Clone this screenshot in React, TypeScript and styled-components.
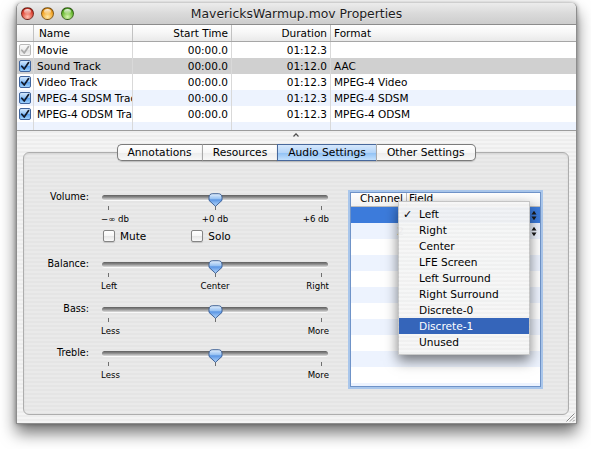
import { FC } from 'react'
import styled, { createGlobalStyle } from 'styled-components'

const GlobalStyle = createGlobalStyle`
  html, body {
    margin: 0;
    background: #ffffff;
  }
  body {
    font-family: 'DejaVu Sans', 'Liberation Sans', sans-serif;
    color: #000;
  }
`

type Track = { name: string; start: string; duration: string; format: string; disabled?: boolean }

const tracks: Track[] = [
  { name: 'Movie', start: '00:00.0', duration: '01:12.3', format: '', disabled: true },
  { name: 'Sound Track', start: '00:00.0', duration: '01:12.0', format: 'AAC' },
  { name: 'Video Track', start: '00:00.0', duration: '01:12.3', format: 'MPEG-4 Video' },
  { name: 'MPEG-4 SDSM Track', start: '00:00.0', duration: '01:12.3', format: 'MPEG-4 SDSM' },
  { name: 'MPEG-4 ODSM Track', start: '00:00.0', duration: '01:12.3', format: 'MPEG-4 ODSM' }
]

const sliders = [
  { label: 'Volume:', value: 50, marks: ['−∞ db', '+0 db', '+6 db'], top: 0, checks: true },
  { label: 'Balance:', value: 50, marks: ['Left', 'Center', 'Right'], top: 14 },
  { label: 'Bass:', value: 50, marks: ['Less', '', 'More'], top: 8 },
  { label: 'Treble:', value: 50, marks: ['Less', '', 'More'], top: 7 }
]

const channels = ['Left', 'Right', 'Center', 'LFE Screen', 'Left Surround', 'Right Surround', 'Discrete-0', 'Discrete-1', 'Unused']

const rowTone = (i: number, selected: boolean) => (selected ? 'selected' : i % 2 === 0 ? 'plain' : 'stripe')

const CheckMark: FC<{ color: string }> = ({ color }) => (
  <svg width="10" height="10" viewBox="0 0 10 10">
    <path d="M1.8 5.2 L4.2 8 L8.6 1.6" fill="none" stroke={color} strokeWidth="1.7" strokeLinecap="round" strokeLinejoin="round" />
  </svg>
)

const SliderThumb: FC = () => (
  <svg width="15" height="14" viewBox="0 0 15 14">
    <defs>
      <linearGradient id="thumbFill" x1="0" y1="0" x2="0" y2="1">
        <stop offset="0" stopColor="#e4effc" />
        <stop offset="0.42" stopColor="#93bff1" />
        <stop offset="0.48" stopColor="#5a95e4" />
        <stop offset="1" stopColor="#b6d8fb" />
      </linearGradient>
    </defs>
    <path
      d="M1 4.4 C1 2 2.4 0.7 4.8 0.7 H10.2 C12.6 0.7 14 2 14 4.4 V7.4 L7.5 13.3 L1 7.4 Z"
      fill="url(#thumbFill)"
      stroke="#34588e"
      strokeWidth="0.9"
    />
  </svg>
)

const PopupArrows: FC = () => (
  <svg width="6" height="11" viewBox="0 0 6 11">
    <path d="M0.5 4.5 L3 0.8 L5.5 4.5 Z M0.5 6.5 L3 10.2 L5.5 6.5 Z" fill="#1b1b1b" />
  </svg>
)

const App: FC = () => {
  return (
    <Page>
      <GlobalStyle />
      <Window>
        <TitleBar>
          <Lights>
            <Light $color="red" />
            <Light $color="yellow" />
            <Light $color="green" />
          </Lights>
          <Title>MavericksWarmup.mov Properties</Title>
          <span />
        </TitleBar>

        <TrackTable>
          <HeaderRow>
            <HeaderCell />
            <HeaderCell $pad="0 4px 0 5px">Name</HeaderCell>
            <HeaderCell $align="right">Start Time</HeaderCell>
            <HeaderCell $align="right">Duration</HeaderCell>
            <HeaderCell $last>Format</HeaderCell>
          </HeaderRow>
          {tracks.map((t, i) => (
            <TrackRow key={t.name} $tone={rowTone(i, i === 1)}>
              <Cell $pad="0 0 0 2px">
                <TrackCheck $disabled={t.disabled}>
                  <CheckMark color={t.disabled ? '#a9a9a9' : '#121a2a'} />
                </TrackCheck>
              </Cell>
              <Cell>{t.name}</Cell>
              <Cell $align="right">{t.start}</Cell>
              <Cell $align="right">{t.duration}</Cell>
              <Cell $last>{t.format}</Cell>
            </TrackRow>
          ))}
          <TrackRow $tone="stripe" $short>
            <Cell />
            <Cell />
            <Cell />
            <Cell />
            <Cell $last />
          </TrackRow>
        </TrackTable>

        <Splitter>
          <svg width="6" height="4" viewBox="0 0 6 4">
            <path d="M0.5 3.5 L3 0.8 L5.5 3.5" fill="none" stroke="#505050" strokeWidth="1.2" />
          </svg>
        </Splitter>

        <TabBar>
          <Tab $first>Annotations</Tab>
          <Tab>Resources</Tab>
          <Tab $active>Audio Settings</Tab>
          <Tab $last>Other Settings</Tab>
        </TabBar>

        <GroupBox>
          <LeftPanel>
            {sliders.map((s) => (
              <SliderGroup key={s.label} $top={s.top}>
                <SliderRow>
                  <SliderLabel>{s.label}</SliderLabel>
                  <SliderBody>
                    <SliderTrack />
                    <ThumbHolder style={{ left: `calc(${s.value}% - 7.5px)` }}>
                      <SliderThumb />
                    </ThumbHolder>
                    <Ticks>
                      <Tick />
                      <Tick />
                      <Tick />
                    </Ticks>
                    <TickLabels>
                      <TickLabel $side="start">{s.marks[0]}</TickLabel>
                      <TickLabel $side="center">{s.marks[1]}</TickLabel>
                      <TickLabel $side="end">{s.marks[2]}</TickLabel>
                    </TickLabels>
                  </SliderBody>
                </SliderRow>
                {s.checks && (
                  <CheckRow>
                    <CheckItem>
                      <PlainCheck />
                      Mute
                    </CheckItem>
                    <CheckItem>
                      <PlainCheck />
                      Solo
                    </CheckItem>
                  </CheckRow>
                )}
              </SliderGroup>
            ))}
          </LeftPanel>

          <ChannelWrap>
            <ChannelBox>
              <ChannelHeader>
                <ChannelHeadCell $divider>Channel</ChannelHeadCell>
                <ChannelHeadCell>Field</ChannelHeadCell>
              </ChannelHeader>
              {Array.from({ length: 12 }).map((_, i) => (
                <ChannelRow key={i} $tone={rowTone(i, i === 0)}>
                  <ChannelNum $selected={i === 0}>{i < 2 ? i + 1 : ''}</ChannelNum>
                  <FieldCell>{i < 2 && <PopupArrows />}</FieldCell>
                </ChannelRow>
              ))}
            </ChannelBox>

            <Menu>
              {channels.map((c, i) => (
                <MenuItem key={c} $highlight={c === 'Discrete-1'}>
                  <MenuCheck>{i === 0 ? '✓' : ''}</MenuCheck>
                  {c}
                </MenuItem>
              ))}
            </Menu>
          </ChannelWrap>
        </GroupBox>

        <ResizeGrip width="11" height="11" viewBox="0 0 11 11">
          <path d="M10.5 2.5 L2.5 10.5 M10.5 6 L6 10.5 M10.5 9 L9 10.5" stroke="#8a8a8a" strokeWidth="1" />
          <path d="M10.5 3.5 L3.5 10.5 M10.5 7 L7 10.5" stroke="#ffffff" strokeWidth="0.8" />
        </ResizeGrip>
      </Window>
    </Page>
  )
}

const Page = styled.div`
  padding: 3px 14px 30px 16px;
`

const Window = styled.div`
  position: relative;
  width: 561px;
  box-sizing: border-box;
  border: 1px solid #8d8d8d;
  border-top: none;
  border-radius: 5px 5px 0 0;
  overflow: hidden;
  padding-bottom: 8px;
  background: repeating-linear-gradient(to bottom, #ededed 0px, #ededed 2px, #f4f4f4 2px, #f4f4f4 4px);
  box-shadow: 0 9px 16px rgba(0, 0, 0, 0.55), 0 0 4px rgba(0, 0, 0, 0.35);
  font-size: 10.5px;
`

const TitleBar = styled.div`
  height: 22px;
  box-sizing: border-box;
  display: grid;
  grid-template-columns: 1fr auto 1fr;
  align-items: center;
  border-bottom: 1px solid #8c8c8c;
  border-radius: 5px 5px 0 0;
  background: linear-gradient(to bottom, #ececec 0%, #dadada 50%, #cdcdcd 100%);
`

const Lights = styled.div`
  display: flex;
  gap: 7px;
  padding-left: 4px;
`

const lightColors = {
  red: ['#ffc2b3', '#e04a3a', '#a3170d'],
  yellow: ['#ffe9a8', '#f3a62a', '#b76c08'],
  green: ['#d8f5b0', '#6cbb34', '#2f7c12']
}

const Light = styled.span<{ $color: keyof typeof lightColors }>`
  position: relative;
  width: 13px;
  height: 13px;
  box-sizing: border-box;
  border-radius: 50%;
  border: 1px solid rgba(0, 0, 0, 0.45);
  background: radial-gradient(
    circle at 50% 80%,
    ${(p) => lightColors[p.$color][0]} 0%,
    ${(p) => lightColors[p.$color][1]} 55%,
    ${(p) => lightColors[p.$color][2]} 100%
  );

  &::after {
    content: '';
    position: absolute;
    left: 2px;
    right: 2px;
    top: 1px;
    height: 5px;
    border-radius: 50%;
    background: linear-gradient(rgba(255, 255, 255, 0.9), rgba(255, 255, 255, 0.1));
  }
`

const Title = styled.div`
  font-size: 12.4px;
  color: #1c1c1c;
  text-shadow: 0 1px 0 rgba(255, 255, 255, 0.5);
  white-space: nowrap;
`

const gridCols = '17px 99px 99px 99px 1fr'

const TrackTable = styled.div`
  background: #ffffff;
  border-bottom: 1px solid #9c9c9c;
`

const HeaderRow = styled.div`
  display: grid;
  grid-template-columns: ${gridCols};
  height: 17px;
  box-sizing: border-box;
  border-bottom: 1px solid #a6a6a6;
  background: linear-gradient(to bottom, #ffffff 0%, #f6f6f6 50%, #e9e9e9 100%);
`

const HeaderCell = styled.div<{ $align?: 'left' | 'right'; $pad?: string; $last?: boolean }>`
  text-align: ${(p) => p.$align || 'left'};
  padding: ${(p) => p.$pad || '0 3px'};
  line-height: 16px;
  border-right: ${(p) => (p.$last ? 'none' : '1px solid #c2c2c2')};
  white-space: nowrap;
  overflow: hidden;
`

const toneColors = {
  plain: '#ffffff',
  stripe: '#edf3fe',
  selected: '#d0d0d0'
}

const TrackRow = styled.div<{ $tone: keyof typeof toneColors; $short?: boolean }>`
  display: grid;
  grid-template-columns: ${gridCols};
  height: ${(p) => (p.$short ? '8px' : '16px')};
  background: ${(p) => toneColors[p.$tone]};
`

const Cell = styled.div<{ $align?: 'left' | 'right'; $pad?: string; $last?: boolean }>`
  display: flex;
  align-items: center;
  justify-content: ${(p) => (p.$align === 'right' ? 'flex-end' : 'flex-start')};
  padding: ${(p) => p.$pad || '0 3px'};
  border-right: ${(p) => (p.$last ? 'none' : '1px solid #d9d9d9')};
  white-space: nowrap;
  overflow: hidden;
  line-height: 16px;
`

const TrackCheck = styled.span<{ $disabled?: boolean }>`
  display: flex;
  align-items: center;
  justify-content: center;
  width: 12px;
  height: 12px;
  box-sizing: border-box;
  border-radius: 2px;
  border: 1px solid ${(p) => (p.$disabled ? '#b9b9b9' : '#3f649d')};
  background: ${(p) =>
    p.$disabled
      ? 'linear-gradient(#fbfbfb, #ececec 50%, #e0e0e0 51%, #f2f2f2)'
      : 'linear-gradient(#d3e8fd, #8dc0f4 50%, #5aa0ee 51%, #9dd0fb)'};
`

const Splitter = styled.div`
  height: 13px;
  box-sizing: border-box;
  display: flex;
  justify-content: center;
  padding: 2px 2px 0 0;
`

const TabBar = styled.div`
  position: relative;
  z-index: 1;
  display: flex;
  justify-content: center;
  height: 17px;
  padding-right: 1px;
`

const Tab = styled.div<{ $active?: boolean; $first?: boolean; $last?: boolean }>`
  height: 17px;
  box-sizing: border-box;
  display: flex;
  align-items: center;
  padding: 0 10px;
  font-size: 10.7px;
  white-space: nowrap;
  border: 1px solid ${(p) => (p.$active ? '#48689b' : '#7b7b7b')};
  border-left: ${(p) => (p.$first ? '1px solid #7b7b7b' : p.$active ? '1px solid #48689b' : '1px solid #a9a9a9')};
  border-right: ${(p) => (p.$last ? '1px solid #7b7b7b' : 'none')};
  border-radius: ${(p) => (p.$first ? '5px 0 0 5px' : p.$last ? '0 5px 5px 0' : '0')};
  background: ${(p) =>
    p.$active
      ? 'linear-gradient(#d6e8fc, #b3d4f8 50%, #8ec0f4 51%, #c2e0fd)'
      : 'linear-gradient(#ffffff, #f7f7f7 50%, #ececec 51%, #f8f8f8)'};
  box-shadow: 0 1px 1px rgba(0, 0, 0, 0.18);
`

const GroupBox = styled.div`
  display: flex;
  align-items: flex-start;
  margin: -9px 7px 0 6px;
  height: 263px;
  box-sizing: border-box;
  padding-top: 36px;
  border: 1px solid #adadad;
  border-radius: 6px;
  background: repeating-linear-gradient(to bottom, #e5e5e5 0px, #e5e5e5 2px, #eaeaea 2px, #eaeaea 4px);
  box-shadow: inset 0 1px 2px rgba(0, 0, 0, 0.08);
`

const LeftPanel = styled.div`
  display: flex;
  flex-direction: column;
  width: 304px;
`

const SliderGroup = styled.div<{ $top: number }>`
  margin-top: ${(p) => p.$top}px;
`

const SliderRow = styled.div`
  display: grid;
  grid-template-columns: 65px 226px;
  column-gap: 13px;
  height: 37px;
`

const SliderLabel = styled.div`
  text-align: right;
  font-size: 9.6px;
  line-height: 16px;
  white-space: nowrap;
`

const SliderBody = styled.div`
  position: relative;
`

const SliderTrack = styled.div`
  height: 5px;
  margin-top: 6px;
  border-radius: 3px;
  background: linear-gradient(to bottom, #5e5e5e 0%, #8c8c8c 45%, #b9b9b9 75%, #dcdcdc 100%);
  box-shadow: 0 1px 0 rgba(255, 255, 255, 0.7);
`

const ThumbHolder = styled.div`
  position: absolute;
  top: 4px;
  width: 15px;
  height: 14px;
  line-height: 0;
`

const Ticks = styled.div`
  display: flex;
  justify-content: space-between;
  padding: 0 6px;
  margin-top: 6px;
`

const Tick = styled.span`
  width: 1px;
  height: 4px;
  background: #6f6f6f;
`

const TickLabels = styled.div`
  display: grid;
  grid-template-columns: 1fr auto 1fr;
  margin: 3px -1px 0 -1px;
  font-size: 8.6px;
  line-height: 13px;
  white-space: nowrap;
`

const TickLabel = styled.span<{ $side: 'start' | 'center' | 'end' }>`
  justify-self: ${(p) => p.$side};
`

const CheckRow = styled.div`
  display: flex;
  gap: 45px;
  margin: 4px 0 0 79px;
  height: 12px;
`

const CheckItem = styled.label`
  display: flex;
  align-items: center;
  gap: 5px;
  font-size: 10.5px;
  line-height: 12px;
`

const PlainCheck = styled.span`
  width: 12px;
  height: 12px;
  box-sizing: border-box;
  border-radius: 2px;
  border: 1px solid #858585;
  background: linear-gradient(#ffffff, #f6f6f6 50%, #e6e6e6 51%, #f9f9f9);
  box-shadow: 0 1px 1px rgba(0, 0, 0, 0.15);
`

const ChannelWrap = styled.div`
  position: relative;
  margin: 3px 0 0 22px;
  width: 191px;
  height: 195px;
`

const ChannelBox = styled.div`
  height: 100%;
  box-sizing: border-box;
  border: 1px solid #6f93c8;
  background: #ffffff;
  box-shadow: 0 0 0 2px #a9c6eb;
  overflow: hidden;
`

const ChannelHeader = styled.div`
  display: grid;
  grid-template-columns: 56px 1fr;
  height: 14px;
  box-sizing: border-box;
  border-bottom: 1px solid #bdbdbd;
  background: linear-gradient(#ffffff, #f1f1f1);
`

const ChannelHeadCell = styled.div<{ $divider?: boolean }>`
  text-align: ${(p) => (p.$divider ? 'right' : 'left')};
  padding: ${(p) => (p.$divider ? '0 3px 0 0' : '0 0 0 2px')};
  border-right: ${(p) => (p.$divider ? '1px solid #bdbdbd' : 'none')};
  line-height: 11px;
  white-space: nowrap;
`

const channelTones = {
  plain: '#ffffff',
  stripe: '#edf3fe',
  selected: '#3c7bdb'
}

const ChannelRow = styled.div<{ $tone: keyof typeof channelTones }>`
  display: grid;
  grid-template-columns: 56px 1fr;
  height: 16px;
  background: ${(p) => channelTones[p.$tone]};
`

const ChannelNum = styled.div<{ $selected?: boolean }>`
  text-align: right;
  padding-right: 3px;
  line-height: 16px;
  color: ${(p) => (p.$selected ? '#ffffff' : '#000000')};
`

const FieldCell = styled.div`
  display: flex;
  align-items: center;
  justify-content: flex-end;
  padding-right: 3px;
`

const Menu = styled.div`
  position: absolute;
  left: 48px;
  top: 9px;
  width: 132px;
  padding: 4px 0;
  box-sizing: border-box;
  background: repeating-linear-gradient(to bottom, rgba(246, 246, 246, 0.97) 0px, rgba(246, 246, 246, 0.97) 2px, rgba(240, 240, 240, 0.97) 2px, rgba(240, 240, 240, 0.97) 4px);
  border: 1px solid rgba(0, 0, 0, 0.18);
  box-shadow: 0 6px 12px rgba(0, 0, 0, 0.5);
  z-index: 2;
`

const MenuItem = styled.div<{ $highlight?: boolean }>`
  display: flex;
  align-items: center;
  height: 16px;
  font-size: 10.6px;
  white-space: nowrap;
  background: ${(p) => (p.$highlight ? '#3565ba' : 'transparent')};
  color: ${(p) => (p.$highlight ? '#ffffff' : '#000000')};
`

const MenuCheck = styled.span`
  width: 16px;
  padding-left: 4px;
  font-size: 11px;
`

const ResizeGrip = styled.svg`
  position: absolute;
  right: 1px;
  bottom: 1px;
`

export default App
